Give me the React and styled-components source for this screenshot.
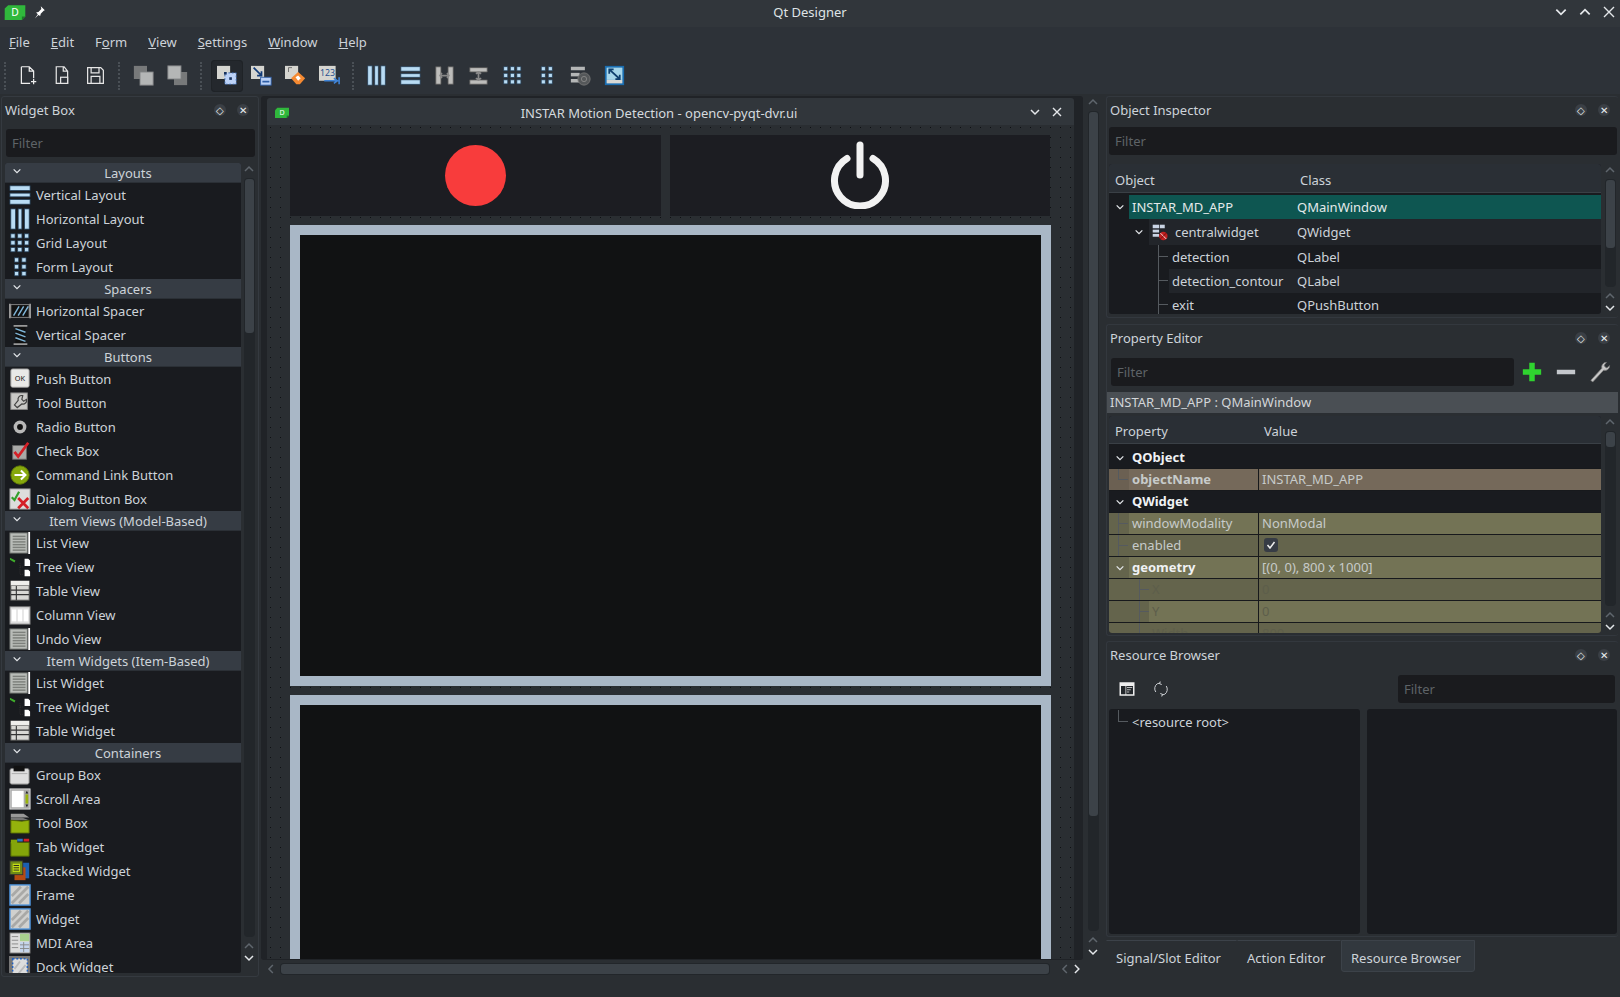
import React from 'react'
import styled, { createGlobalStyle } from 'styled-components'

const GlobalStyle = createGlobalStyle`
  html, body { margin: 0; padding: 0; background: #2a2e32; }
  #root { width: 1620px; height: 997px; overflow: hidden; }
  * { box-sizing: border-box; }
`

const Bar = ({ x, y, w, h, c = '#b9dcf4' }) => (
  <rect x={x} y={y} width={w} height={h} fill={c} stroke="#24405a" strokeWidth="0.8" />
)
const Cells = ({ cols, rows }) => (
  <>
    {rows.flatMap((y) => cols.map((x) => <Bar key={`${x}-${y}`} x={x} y={y} w={4.6} h={4.6} />))}
  </>
)
const ListSheet = (
  <>
    <rect x="1" y="1" width="19" height="22" fill="#b9bcb8" stroke="#6c6f6c" />
    {[4, 7, 10, 13, 16, 19].map((y) => <rect key={y} x="4" y={y} width="14" height="1.6" fill="#7d807c" />)}
    <rect x="21" y="0" width="2" height="24" fill="#fff" />
  </>
)
const TreeGlyph = (
  <>
    <path d="M1 2l6 3-1 2-5-3z" fill="#3fae2a" />
    <path d="M12 8v12M12 12h4M12 20h4" stroke="#333" strokeDasharray="1 1" fill="none" />
    <path d="M17 3h4l2 2v6h-6zM17 15h4l2 2v5h-6z" fill="#fff" />
  </>
)
const TableGlyph = (
  <>
    <rect x="2" y="1" width="20" height="21" fill="#d8d8d4" stroke="#555" />
    <path d="M2 6h20M2 11h20M2 16h20M8 1v21" stroke="#333" strokeWidth="1.2" />
    <rect x="2" y="1" width="20" height="5" fill="#efefec" />
  </>
)
const Hatch = (
  <>
    <rect x="1" y="1" width="22" height="22" fill="#d0d0ce" stroke="#4a90d8" strokeWidth="1.5" />
    <path d="M3 13L13 3M3 21L21 3M11 21L21 11" stroke="#a9a9a7" strokeWidth="3" />
  </>
)

const icons = {
  newDoc: <path d="M5 2h9l5 5v8M5 2v19h10M14 2v5h5M16 19h6M19 16v6" fill="none" stroke="#eee" strokeWidth="1.4" />,
  openDoc: <><path d="M6 2h9l4 5v14H6zM14 2v5h5" fill="none" stroke="#e6e6e6" strokeWidth="1.4" /><rect x="11" y="14" width="8" height="7" fill="#2e333a" stroke="#e6e6e6" strokeWidth="1.4" /></>,
  save: <path d="M3 3h15l3 3v15H3zM7 3v6h9V3M7 21v-8h10v8" fill="none" stroke="#e6e6e6" strokeWidth="1.4" />,
  back: <><rect x="1" y="1" width="15" height="15" fill="#77797a" /><rect x="8" y="8" width="15" height="15" fill="#b4b6b6" stroke="#808284" /></>,
  front: <><rect x="8" y="8" width="15" height="15" fill="#77797a" /><rect x="1" y="1" width="15" height="15" fill="#b4b6b6" stroke="#808284" /></>,
  editWidget: <><rect x="0" y="1" width="15" height="15" fill="#d5d5d0" /><rect x="9" y="9" width="13" height="13" fill="#bcd2f7" stroke="#2f5fa8" strokeDasharray="2 2" /><rect x="14" y="14" width="3" height="3" fill="#17325e" /><rect x="8" y="8" width="3" height="3" fill="#17325e" /></>,
  editSignal: <><rect x="0" y="1" width="15" height="15" fill="#d5d5d0" /><rect x="11" y="14" width="12" height="9" fill="#bcd2f7" stroke="#2f5fa8" /><rect x="13" y="18" width="8" height="2" fill="#2f5fa8" /><path d="M3 3l9 9M12 7v5H7" stroke="#123b78" strokeWidth="2" fill="none" /></>,
  editBuddy: <><rect x="0" y="1" width="15" height="15" fill="#d5d5d0" /><path d="M4 8V3h4" stroke="#666" fill="none" /><path d="M7 15l8-7 8 7-6 7h-4z" fill="#f58a32" /><path d="M12 14l3-2 3 3-3 3z" fill="#fff" /></>,
  editTab: <><rect x="0" y="1" width="19" height="17" fill="#d5d5d0" /><text x="1" y="12" fontSize="10" fill="#27508f" fontFamily="Noto Sans">123</text><path d="M6 18h14M17 15l4 3-4 3M23 14v8" stroke="#3f84d8" strokeWidth="1.8" fill="none" /></>,
  splitH: <><path d="M2 2h6v20H2zM16 2h6v20h-6z" fill="#bdbdbb" stroke="#555" /><path d="M8 12h8M9 9l-2 3 2 3M15 9l2 3-2 3" stroke="#888" strokeWidth="2" fill="none" /></>,
  splitV: <><path d="M2 3h20v5H2zM2 17h20v5H2z" fill="#bdbdbb" stroke="#555" /><path d="M12 8v9M9 10l3-2 3 2M9 15l3 2 3-2" stroke="#888" strokeWidth="2" fill="none" /></>,
  breakLayout: <><rect x="1" y="2" width="16" height="4" fill="#b4b6b6" /><rect x="1" y="9" width="10" height="4" fill="#b4b6b6" /><rect x="1" y="16" width="10" height="4" fill="#b4b6b6" /><circle cx="16" cy="16" r="7" fill="#55585a" stroke="#777" /><circle cx="16" cy="16" r="3" fill="none" stroke="#888" /></>,
  adjust: <><rect x="1" y="1" width="22" height="22" fill="#1a6db0" /><rect x="3" y="3" width="18" height="14" fill="#a7d6ea" /><rect x="3" y="17" width="18" height="4" fill="#d8d8d4" /><path d="M6 5l12 11M6 10V5h5M18 11v5h-5" stroke="#0f3f6e" strokeWidth="2" fill="none" /></>,
  vLayout: <><Bar x={1} y={2} w={22} h={5} /><Bar x={1} y={10} w={22} h={4} /><Bar x={1} y={17} w={22} h={5} /></>,
  hLayout: <><Bar x={2} y={1} w={5} h={22} /><Bar x={10} y={1} w={4} h={22} /><Bar x={17} y={1} w={5} h={22} /></>,
  gridLayout: <Cells cols={[2, 9.5, 17]} rows={[2, 9.5, 17]} />,
  formLayout: <Cells cols={[6, 14]} rows={[2, 9.5, 17]} />,
  hSpacer: <><path d="M2 5h20v14H2z" fill="#111" stroke="#888" /><path d="M1 4v16M23 4v16" stroke="#999" strokeWidth="2" /><path d="M5 17l6-10M10 17l6-10M15 17l6-10" stroke="#7fb5d8" strokeWidth="1.6" /></>,
  vSpacer: <><path d="M7 2h11v20H7z" fill="#111" /><path d="M5 2h15M5 22h15" stroke="#999" strokeWidth="2" /><path d="M7 5l11 4M7 10l11 4M7 15l11 4" stroke="#7fb5d8" strokeWidth="1.6" /></>,
  push: <><rect x="2" y="1" width="20" height="20" rx="2" fill="#e9e9e7" stroke="#999" /><text x="12" y="14" textAnchor="middle" fontSize="8" fill="#111" fontFamily="Noto Sans">OK</text></>,
  tool: <><rect x="2" y="1" width="18" height="18" fill="#c9c9c7" stroke="#888" /><path d="M15 4a4 4 0 0 0-5 5l-4 5 3 3 5-4a4 4 0 0 0 5-5l-3 2-2-2z" fill="none" stroke="#444" strokeWidth="1.3" /></>,
  radio: <><circle cx="12" cy="12" r="7" fill="#b8b8b8" /><circle cx="12" cy="12" r="3.2" fill="#111" /></>,
  check: <><rect x="4" y="6" width="15" height="15" fill="#a9a9a7" stroke="#666" /><path d="M6 13l4 5 11-15" fill="none" stroke="#d42027" strokeWidth="3" /></>,
  command: <><circle cx="12" cy="12" r="10" fill="#86a80c" stroke="#5e7608" /><path d="M6 12h11M13 7l5 5-5 5" stroke="#fff" strokeWidth="2.2" fill="none" /></>,
  dialog: <><rect x="1" y="1" width="22" height="22" fill="#ddd" stroke="#999" /><path d="M3 10l3 3 5-9" stroke="#33a02c" strokeWidth="2.4" fill="none" /><path d="M10 11l11 11M21 11L10 22" stroke="#d42027" strokeWidth="3" /></>,
  list: ListSheet,
  tree: TreeGlyph,
  table: TableGlyph,
  column: <><rect x="1" y="3" width="22" height="19" fill="#ddd" stroke="#777" /><rect x="3" y="6" width="5" height="13" fill="#fff" /><rect x="9.5" y="6" width="5" height="13" fill="#fff" /><rect x="16" y="6" width="5" height="13" fill="#fff" /></>,
  group: <><rect x="1" y="5" width="21" height="17" rx="2" fill="#dedede" stroke="#777" /><rect x="5" y="2" width="12" height="6" fill="#111" /><rect x="3" y="10" width="17" height="1" fill="#aaa" /></>,
  scroll: <><rect x="1" y="1" width="22" height="22" fill="#aaa" stroke="#ddd" /><rect x="3" y="3" width="13" height="18" fill="#fff" /><rect x="18" y="7" width="3" height="10" fill="#9ab40c" /><path d="M19.5 3l-1.5 3h3zM19.5 21l-1.5-3h3z" fill="#222" /></>,
  toolbox: <><path d="M2 2h14l6 4H2z" fill="#999" /><path d="M2 6h12l8 3H2z" fill="#777" /><path d="M2 9l12 1 8-1v14H2z" fill="#94b30c" stroke="#536608" /></>,
  tab: <><path d="M2 7h20v15H2z" fill="#84a50a" stroke="#4e6206" /><rect x="2" y="4" width="7" height="4" fill="#84a50a" /><rect x="9" y="3" width="6" height="3" fill="#2a73c4" /><rect x="16" y="3" width="6" height="3" fill="#d42027" /></>,
  stacked: <><rect x="12" y="3" width="10" height="17" fill="#1c5fb0" /><rect x="6" y="8" width="12" height="14" fill="#b54a12" /><rect x="1" y="1" width="14" height="15" fill="#6f8a18" stroke="#333" /><rect x="4" y="4" width="8" height="9" fill="#c4dc16" /><path d="M5 6h6M5 8.500h6M5 11h6" stroke="#222" /></>,
  frame: Hatch,
  widget: Hatch,
  mdi: <><rect x="1" y="1" width="22" height="22" fill="#ddd" stroke="#666" /><rect x="12" y="2" width="10" height="8" fill="#a9d18e" /><rect x="12" y="11" width="10" height="11" fill="#c4d4ec" /><path d="M12 14h10M12 18h10M16 11v11M3 5h7M3 9h7M3 13h7M3 17h7" stroke="#888" /></>,
  dock: <><rect x="0" y="0" width="23" height="24" fill="#777" /><rect x="4" y="3" width="16" height="21" fill="#ddd" stroke="#1f5fc0" strokeDasharray="2 2" strokeWidth="1.6" /><path d="M6 14l6-8M8 22l10-12" stroke="#bbb" strokeWidth="2" /></>,
  formIcon: <><rect x="1" y="1" width="9" height="5" fill="#c9d4e4" /><rect x="1" y="8" width="9" height="4" fill="#c9d4e4" /><rect x="1" y="14" width="9" height="4" fill="#c9d4e4" /><rect x="11" y="1" width="7" height="5" fill="#c9d4e4" /><circle cx="16" cy="17" r="6" fill="#c02020" /><path d="M12 13l8 8" stroke="#fff" strokeWidth="1.2" /><path d="M12 21l8-8" stroke="#5a0000" /></>,
  plus: <path d="M12 2v20M2 12h20" stroke="#2fd32f" strokeWidth="6" />,
  minus: <path d="M2 12h20" stroke="#c4c7cc" strokeWidth="5" />,
  wrench: <path d="M2 21L14 8a5 5 0 0 1 5-6.500l-2.500 3 1 2 2 1 3-2.500a5 5 0 0 1-6.500 5L4 23z" fill="#c8c8c8" stroke="#777" strokeWidth="0.8" />,
  sheet: <><rect x="2" y="3" width="20" height="18" fill="#eee" /><rect x="4" y="8" width="6" height="11" fill="#23272b" /><rect x="11" y="8" width="9" height="11" fill="#23272b" /><path d="M12 10h7M12 13h5M12 16h3" stroke="#eee" /></>,
  reload: <path d="M5 16a8 8 0 0 1 2-11l4-1M19 8a8 8 0 0 1-2 11l-4 1M11 2l-1 3 3 1M13 22l1-3-3-1" fill="none" stroke="#cfd2d6" strokeWidth="1.3" />,
  pin: <path d="M15 2l7 7-2 1-5 5-1 4-3-2-6 6 5-7-3-3 4-1 5-5z" fill="#fff" />,
}

const Icon = ({ name, size = 22 }) => (
  <svg width={size} height={size} viewBox="0 0 24 24" aria-hidden="true">{icons[name]}</svg>
)

const Logo = ({ w = 18, h = 14 }) => (
  <svg width={w} height={h} viewBox="0 0 18 14" aria-hidden="true">
    <path d="M3 1h15v10l-3 3H0V4z" fill="#30b83c" />
    <path d="M15 14l3-3h-3z" fill="#1c7a28" />
    <text x="9" y="10.500" textAnchor="middle" fontSize="9" fill="#fff" fontFamily="Noto Sans">D</text>
  </svg>
)

const Chevron = ({ dir = 'down', dim, size = 12, color }) => {
  const d = { down: 'M2 4l4 4 4-4', up: 'M2 8l4-4 4 4', left: 'M8 2L4 6l4 4', right: 'M4 2l4 4-4 4' }[dir]
  return (
    <svg width={size} height={size} viewBox="0 0 12 12" aria-hidden="true">
      <path d={d} fill="none" stroke={color || (dim ? '#5f666d' : '#e4e7ea')} strokeWidth="1.5" />
    </svg>
  )
}

const Page = styled.div`
  width: 1620px;
  height: 997px;
  display: flex;
  flex-direction: column;
  overflow: hidden;
  background: #2a2e32;
  color: #cdd3d9;
  font-family: "Noto Sans", sans-serif;
  font-size: 13px;
`

const TitleBar = styled.div`
  height: 27px;
  flex: none;
  display: flex;
  align-items: center;
  position: relative;
  padding: 0 3px 3px 4px;
  gap: 6px;
  background: #31363b;
  color: #dfe3e6;
`

const AppTitle = styled.div`
  position: absolute;
  left: 0;
  right: 0;
  text-align: center;
`

const WindowButtons = styled.div`
  margin-left: auto;
  display: flex;
  gap: 10px;
  padding-right: 1px;
`

const MenuBar = styled.div`
  height: 31px;
  flex: none;
  display: flex;
  align-items: center;
  padding: 0 0 2px 9px;
  gap: 21px;
  background: #2d3238;
`

const ToolBar = styled.div`
  height: 36px;
  flex: none;
  display: flex;
  align-items: center;
  padding: 0 0 1px 4px;
  background: #2d3238;
`

const Grip = styled.div`
  width: 2px;
  height: 28px;
  border-left: 2px dotted #4a5056;
  flex: none;
  margin: ${(p) => p.$margin};
`

const ToolButton = styled.div`
  width: 32px;
  height: 32px;
  flex: none;
  margin-right: 2px;
  display: flex;
  align-items: center;
  justify-content: center;
  border-radius: 4px;
  background: ${(p) => (p.$active ? '#24282d' : 'transparent')};
  box-shadow: ${(p) => (p.$active ? 'inset 0 0 0 1px #1f2327' : 'none')};
`

const Main = styled.div`
  flex: 1;
  display: flex;
  min-height: 0;
  padding-top: 2px;
`

const LeftDock = styled.div`
  width: 258px;
  height: 881px;
  flex: none;
  margin-left: 1px;
  padding: 0 3px;
  display: flex;
  flex-direction: column;
  border: 1px solid #353a40;
  border-radius: 3px;
`

const DockHead = styled.div`
  height: 26px;
  flex: none;
  display: flex;
  align-items: center;
  padding-left: ${(p) => p.$pad}px;
  color: #cdd3d9;
`

const DockButtons = styled.div`
  margin-left: auto;
  display: flex;
  align-items: center;
  gap: 11px;
  padding-right: ${(p) => p.$right}px;
`

const DockButton = styled.div`
  width: 12px;
  height: 12px;
  border-radius: 50%;
  background: #3a3f45;
  color: #eceff1;
  display: flex;
  align-items: center;
  justify-content: center;
  font-size: 10px;
  line-height: 12px;
`

const Filter = styled.div`
  height: 28px;
  width: ${(p) => (p.$width ? `${p.$width}px` : 'auto')};
  flex: none;
  margin: ${(p) => p.$margin || 0};
  padding: 0 6px;
  display: flex;
  align-items: center;
  border-radius: 3px;
  background: #1a1b1e;
  color: #5e6367;
`

const BoxBody = styled.div`
  flex: 1;
  display: flex;
  min-height: 0;
  margin-top: 6px;
`

const BoxList = styled.div`
  width: 236px;
  margin-right: 1px;
  margin-bottom: 3px;
  overflow: hidden;
  flex: none;
  background: #191b1f;
  border-radius: 2px;
`

const Category = styled.div`
  height: 20px;
  position: relative;
  display: flex;
  align-items: center;
  justify-content: center;
  padding-left: 10px;
  background: #363c44;
  border-bottom: 1px solid #2b3036;
`

const CategoryArrow = styled.span`
  position: absolute;
  left: 7px;
  top: 3px;
  display: flex;
`

const BoxItem = styled.div`
  height: 24px;
  display: flex;
  align-items: center;
  padding-left: 4px;
  gap: 5px;
  color: #cdd3d9;
`

const ScrollTrack = styled.div`
  width: 14px;
  flex: none;
  display: flex;
  flex-direction: column;
  align-items: center;
  height: ${(p) => p.$height}px;
`

const ScrollGroove = styled.div`
  flex: 1;
  width: 11px;
  margin: 3px 0;
  padding: 1px;
  border-radius: 4px;
  background: #22262a;
`

const ScrollThumb = styled.div`
  height: ${(p) => p.$size}px;
  border-radius: 3px;
  background: #3c4248;
`

const Scrollbar = ({ height, thumb }) => (
  <ScrollTrack $height={height}>
    <Chevron dir="up" dim />
    <ScrollGroove><ScrollThumb $size={thumb} /></ScrollGroove>
    <Chevron dir="up" dim />
    <Chevron dir="down" />
  </ScrollTrack>
)

const Center = styled.div`
  width: 842px;
  margin-left: 2px;
  flex: none;
  display: flex;
  flex-direction: column;
`

const CenterTop = styled.div`
  height: 864px;
  display: flex;
  gap: 3px;
`

const MdiArea = styled.div`
  width: 822px;
  padding: 2px 9px 0 6px;
  background: #202327;
  border-radius: 3px;
  overflow: hidden;
`

const SubWindow = styled.div`
  width: 807px;
  height: 861px;
  display: flex;
  flex-direction: column;
  overflow: hidden;
  border-radius: 3px 3px 0 0;
`

const SubTitle = styled.div`
  height: 27px;
  flex: none;
  display: flex;
  align-items: center;
  position: relative;
  padding: 1px 10px 0 8px;
  background: #31363b;
  color: #d5dade;
`

const SubTitleText = styled.div`
  position: absolute;
  left: 0;
  right: 23px;
  top: 6px;
  text-align: center;
`

const SubButtons = styled.div`
  margin-left: auto;
  display: flex;
  align-items: center;
  gap: 10px;
  padding-right: 1px;
`

const Form = styled.div`
  flex: 1;
  padding: 10px 23px 0 23px;
  overflow: hidden;
  background-color: #2a2e32;
  background-image: radial-gradient(circle at 0.5px 0.5px, #0e1012 0.7px, transparent 0.8px);
  background-size: 10px 10px;
  background-position: 3px 2px;
`

const ButtonRow = styled.div`
  display: grid;
  grid-template-columns: 371px 380px;
  gap: 9px;
  height: 81px;
`

const FormButton = styled.div`
  display: flex;
  align-items: center;
  justify-content: center;
  background: #1c1d22;
`

const RecordDot = styled.div`
  width: 61px;
  height: 61px;
  border-radius: 50%;
  background: #f83c3c;
`

const PowerIcon = styled.svg`
  margin-bottom: 2px;
`

const VideoFrame = styled.div`
  height: ${(p) => p.$height}px;
  margin-top: 9px;
  border: 10px solid #a9b7c6;
  background: #111213;
`

const HScroll = styled.div`
  height: 16px;
  padding: 1px 20px 0 4px;
  display: flex;
  align-items: center;
`

const HGroove = styled.div`
  width: 783px;
  height: 12px;
  margin: 0 9px 0 3px;
  padding: 1px;
  border-radius: 4px;
  background: #22262a;
`

const HThumb = styled.div`
  height: 100%;
  border-radius: 3px;
  background: #3c4248;
`

const RightDock = styled.div`
  flex: 1;
  min-width: 0;
  padding: 0 2px 0 3px;
  display: flex;
  flex-direction: column;
`

const DockPanel = styled.div`
  height: ${(p) => p.$height}px;
  flex: none;
  margin-bottom: ${(p) => p.$gap || 0}px;
  padding-left: 2px;
  border: 1px solid #33383e;
  border-right: 0;
  border-radius: 3px;
  display: flex;
  flex-direction: column;
  overflow: hidden;
`

const TreeWrap = styled.div`
  display: flex;
  margin-top: ${(p) => p.$top}px;
  gap: ${(p) => p.$gap || 2}px;
`

const TreeView = styled.div`
  width: 492px;
  height: ${(p) => p.$height}px;
  flex: none;
  overflow: hidden;
  background: #191b1f;
  border-radius: 3px;
`

const TreeHead = styled.div`
  height: ${(p) => p.$height}px;
  display: flex;
  align-items: center;
  padding: 3px 0 0 6px;
  background: #2a2f35;
  border-bottom: 1px solid #3a4046;
`

const HeadCell = styled.div`
  width: ${(p) => p.$width || 'auto'}px;
  flex: none;
`

const TreeRow = styled.div`
  height: ${(p) => p.$height || 24}px;
  margin-top: ${(p) => p.$top || 0}px;
  display: flex;
`

const Gutter = styled.div`
  width: ${(p) => p.$width}px;
  flex: none;
  position: relative;
  background: ${(p) => p.$bg || 'transparent'};
`

const Branch = styled.span`
  position: absolute;
  left: ${(p) => p.$left}px;
  top: 0;
  height: 50%;
  width: 10px;
  border-left: 1px solid #555a5f;
  border-bottom: 1px solid #555a5f;
  &::after {
    content: '';
    display: ${(p) => (p.$through ? 'block' : 'none')};
    position: absolute;
    left: -1px;
    top: 100%;
    height: 120%;
    border-left: 1px solid #555a5f;
  }
`

const ArrowSlot = styled.span`
  position: absolute;
  left: ${(p) => p.$left}px;
  top: 50%;
  margin-top: -5px;
  display: flex;
`

const TreeBody = styled.div`
  flex: 1;
  display: flex;
  align-items: center;
  gap: 6px;
  padding-left: 3px;
  background: ${(p) => p.$bg || 'transparent'};
  color: ${(p) => (p.$selected ? '#e4e9ea' : '#cdd3d9')};
`

const TreeName = styled.div`
  width: ${(p) => p.$width}px;
  flex: none;
`

const PropRow = styled.div`
  height: 22px;
  margin-top: ${(p) => p.$top || 0}px;
  display: flex;
  border-bottom: 1px solid #17191c;
  background: ${(p) => p.$bg || 'transparent'};
`

const PropName = styled.div`
  width: ${(p) => p.$width}px;
  flex: none;
  padding-left: 3px;
  line-height: 21px;
  font-weight: ${(p) => (p.$bold ? 700 : 400)};
  color: ${(p) => (p.$muted ? '#5d5e4b' : p.$bold && !p.$bg ? '#f0f2f4' : '#c7cbca')};
  background: ${(p) => p.$bg || 'transparent'};
`

const PropValue = styled.div`
  flex: 1;
  display: flex;
  align-items: center;
  padding: 0 0 2px 3px;
  border-left: 1px solid #17191c;
  color: ${(p) => (p.$muted ? '#5d5e4b' : '#c7cbca')};
`

const CheckMark = styled.div`
  width: 14px;
  height: 14px;
  margin-left: 2px;
  border-radius: 3px;
  background: #373c45;
  display: flex;
  align-items: center;
  justify-content: center;
`

const FilterRow = styled.div`
  display: flex;
  align-items: center;
  height: 30px;
  margin-top: ${(p) => p.$top || 0}px;
`

const IconButton = styled.div`
  width: 34px;
  flex: none;
  margin-left: ${(p) => p.$left || 0}px;
  display: flex;
  justify-content: center;
`

const ClassBar = styled.div`
  height: 21px;
  margin: 5px 0 0 -2px;
  padding-left: 3px;
  line-height: 20px;
  background: #4a4f54;
  color: #d3d6d9;
`

const ResourcePane = styled.div`
  width: ${(p) => p.$width}px;
  height: 225px;
  flex: none;
  background: #191b1f;
  border-radius: 3px;
  padding-top: 1px;
`

const TabRow = styled.div`
  display: flex;
  height: 32px;
  margin-top: 3px;
`

const Tab = styled.div`
  width: ${(p) => p.$width}px;
  flex: none;
  padding-left: 9px;
  padding-top: 8px;
  background: ${(p) => (p.$active ? '#32383e' : 'transparent')};
  border: 1px solid ${(p) => (p.$active ? '#3c4249' : 'transparent')};
  border-top-color: #3c4249;
  border-radius: 0 0 3px 3px;
`

const DockTitle = ({ title, right, pad = 1 }) => (
  <DockHead $pad={pad}>
    {title}
    <DockButtons $right={right}>
      <DockButton>◇</DockButton>
      <DockButton>✕</DockButton>
    </DockButtons>
  </DockHead>
)

const TreeArrow = ({ left }) => (
  <ArrowSlot $left={left}><Chevron size={10} /></ArrowSlot>
)

const widgetGroups = [
  ['Layouts', [['Vertical Layout', 'vLayout'], ['Horizontal Layout', 'hLayout'], ['Grid Layout', 'gridLayout'], ['Form Layout', 'formLayout']]],
  ['Spacers', [['Horizontal Spacer', 'hSpacer'], ['Vertical Spacer', 'vSpacer']]],
  ['Buttons', [['Push Button', 'push'], ['Tool Button', 'tool'], ['Radio Button', 'radio'], ['Check Box', 'check'], ['Command Link Button', 'command'], ['Dialog Button Box', 'dialog']]],
  ['Item Views (Model-Based)', [['List View', 'list'], ['Tree View', 'tree'], ['Table View', 'table'], ['Column View', 'column'], ['Undo View', 'list']]],
  ['Item Widgets (Item-Based)', [['List Widget', 'list'], ['Tree Widget', 'tree'], ['Table Widget', 'table']]],
  ['Containers', [['Group Box', 'group'], ['Scroll Area', 'scroll'], ['Tool Box', 'toolbox'], ['Tab Widget', 'tab'], ['Stacked Widget', 'stacked'], ['Frame', 'frame'], ['Widget', 'widget'], ['MDI Area', 'mdi'], ['Dock Widget', 'dock']]],
]

const menus = [['F', 'ile'], ['E', 'dit'], ['F', 'o', 'rm'], ['V', 'iew'], ['S', 'ettings'], ['W', 'indow'], ['H', 'elp']]

const toolGroups = [
  ['newDoc', 'openDoc', 'save'],
  ['back', 'front'],
  ['editWidget', 'editSignal', 'editBuddy', 'editTab'],
  ['hLayout', 'vLayout', 'splitH', 'splitV', 'gridLayout', 'formLayout', 'breakLayout', 'adjust'],
]
const gripMargins = ['', '0 7px 0 5px', '0 9px 0 5px', '0 6px 0 5px']

const olive = '#737355'
const oliveDark = '#64644c'

const App = () => (
  <Page>
    <GlobalStyle />
    <TitleBar>
      <Logo w={22} h={16} />
      <Icon name="pin" size={14} />
      <AppTitle>Qt Designer</AppTitle>
      <WindowButtons>
        <Chevron dir="down" size={14} />
        <Chevron dir="up" size={14} />
        <svg width="14" height="14" viewBox="0 0 14 14" aria-hidden="true"><path d="M2 2l10 10M12 2L2 12" stroke="#e4e7ea" strokeWidth="1.4" /></svg>
      </WindowButtons>
    </TitleBar>

    <MenuBar>
      {menus.map((m) => (
        <span key={m.join('')}>
          {m.length === 3 ? <>{m[0]}<u>{m[1]}</u>{m[2]}</> : <><u>{m[0]}</u>{m[1]}</>}
        </span>
      ))}
    </MenuBar>

    <ToolBar>
      <Grip $margin="0 5px 0 0" />
      {toolGroups.map((group, i) => (
        <React.Fragment key={group[0]}>
          {i > 0 && <Grip $margin={gripMargins[i]} />}
          {group.map((name) => (
            <ToolButton key={name} $active={name === 'editWidget'}><Icon name={name} size={21} /></ToolButton>
          ))}
        </React.Fragment>
      ))}
    </ToolBar>

    <Main>
      <LeftDock>
        <DockTitle title="Widget Box" right={6} pad={0} />
        <Filter $margin="6px 0 0 1px">Filter</Filter>
        <BoxBody>
          <BoxList>
            {widgetGroups.map(([title, items]) => (
              <React.Fragment key={title}>
                <Category>
                  <CategoryArrow><Chevron size={10} /></CategoryArrow>
                  {title}
                </Category>
                {items.map(([label, icon]) => (
                  <BoxItem key={label}><Icon name={icon} />{label}</BoxItem>
                ))}
              </React.Fragment>
            ))}
          </BoxList>
          <Scrollbar height={801} thumb={154} />
        </BoxBody>
      </LeftDock>

      <Center>
        <CenterTop>
          <MdiArea>
            <SubWindow>
              <SubTitle>
                <Logo w={14} h={11} />
                <SubTitleText>INSTAR Motion Detection - opencv-pyqt-dvr.ui</SubTitleText>
                <SubButtons>
                  <Chevron dir="down" />
                  <svg width="12" height="12" viewBox="0 0 12 12" aria-hidden="true"><path d="M2 2l8 8M10 2l-8 8" stroke="#e4e7ea" strokeWidth="1.4" /></svg>
                </SubButtons>
              </SubTitle>
              <Form>
                <ButtonRow>
                  <FormButton><RecordDot /></FormButton>
                  <FormButton>
                    <PowerIcon width="62" height="68" viewBox="0 0 62 68" aria-hidden="true">
                      <path d="M18 17.500a25.500 25.500 0 1 0 26 0" fill="none" stroke="#f2f2f2" strokeWidth="7" strokeLinecap="round" />
                      <path d="M31 4v30" stroke="#f2f2f2" strokeWidth="7" strokeLinecap="round" />
                    </PowerIcon>
                  </FormButton>
                </ButtonRow>
                <VideoFrame $height={461} />
                <VideoFrame $height={400} />
              </Form>
            </SubWindow>
          </MdiArea>
          <Scrollbar height={862} thumb={704} />
        </CenterTop>
        <HScroll>
          <Chevron dir="left" dim />
          <HGroove><HThumb /></HGroove>
          <Chevron dir="left" dim />
          <Chevron dir="right" />
        </HScroll>
      </Center>

      <RightDock>
        <DockPanel $height={222} $gap={6}>
          <DockTitle title="Object Inspector" right={8} />
          <Filter $margin="4px 1px 0 0">Filter</Filter>
          <TreeWrap $top={9}>
            <TreeView $height={150}>
              <TreeHead $height={29}>
                <HeadCell $width={185}>Object</HeadCell>
                <HeadCell>Class</HeadCell>
              </TreeHead>
              <TreeRow $height={24} $top={2}>
                <Gutter $width={20}><TreeArrow left={6} /></Gutter>
                <TreeBody $bg="#0e5651" $selected><TreeName $width={159}>INSTAR_MD_APP</TreeName>QMainWindow</TreeBody>
              </TreeRow>
              <TreeRow $height={26}>
                <Gutter $width={40}><TreeArrow left={25} /></Gutter>
                <TreeBody $bg="#22252a"><Icon name="formIcon" size={17} /><TreeName $width={116}>centralwidget</TreeName>QWidget</TreeBody>
              </TreeRow>
              <TreeRow>
                <Gutter $width={60}><Branch $left={49} $through /></Gutter>
                <TreeBody><TreeName $width={119}>detection</TreeName>QLabel</TreeBody>
              </TreeRow>
              <TreeRow>
                <Gutter $width={60}><Branch $left={49} $through /></Gutter>
                <TreeBody $bg="#22252a"><TreeName $width={119}>detection_contour</TreeName>QLabel</TreeBody>
              </TreeRow>
              <TreeRow>
                <Gutter $width={60}><Branch $left={49} $through /></Gutter>
                <TreeBody><TreeName $width={119}>exit</TreeName>QPushButton</TreeBody>
              </TreeRow>
            </TreeView>
            <Scrollbar height={150} thumb={68} />
          </TreeWrap>
        </DockPanel>

        <DockPanel $height={312} $gap={5}>
          <DockTitle title="Property Editor" right={8} />
          <FilterRow $top={6}>
            <Filter $width={403} $margin="0 0 0 2px">Filter</Filter>
            <IconButton $left={1}><Icon name="plus" /></IconButton>
            <IconButton><Icon name="minus" /></IconButton>
            <IconButton><Icon name="wrench" /></IconButton>
          </FilterRow>
          <ClassBar>INSTAR_MD_APP : QMainWindow</ClassBar>
          <TreeWrap $top={3}>
            <TreeView $height={217}>
              <TreeHead $height={28}>
                <HeadCell $width={149}>Property</HeadCell>
                <HeadCell>Value</HeadCell>
              </TreeHead>
              <PropRow $top={3}>
                <Gutter $width={20}><TreeArrow left={6} /></Gutter>
                <PropName $width={300} $bold>QObject</PropName>
              </PropRow>
              <PropRow $bg="#75695a">
                <Gutter $width={20} $bg="#6b6052"><Branch $left={9} /></Gutter>
                <PropName $width={129} $bold $bg="#75695a">objectName</PropName>
                <PropValue>INSTAR_MD_APP</PropValue>
              </PropRow>
              <PropRow>
                <Gutter $width={20}><TreeArrow left={6} /></Gutter>
                <PropName $width={300} $bold>QWidget</PropName>
              </PropRow>
              <PropRow $bg={olive}>
                <Gutter $width={20} $bg={oliveDark}><Branch $left={9} $through /></Gutter>
                <PropName $width={129}>windowModality</PropName>
                <PropValue>NonModal</PropValue>
              </PropRow>
              <PropRow $bg={oliveDark}>
                <Gutter $width={20}><Branch $left={9} $through /></Gutter>
                <PropName $width={129}>enabled</PropName>
                <PropValue>
                  <CheckMark>
                    <svg width="10" height="10" viewBox="0 0 10 10" aria-hidden="true"><path d="M1.500 5l2.500 3 4.500-6" fill="none" stroke="#eee" strokeWidth="1.500" /></svg>
                  </CheckMark>
                </PropValue>
              </PropRow>
              <PropRow $bg={olive}>
                <Gutter $width={20} $bg={oliveDark}><TreeArrow left={6} /></Gutter>
                <PropName $width={129} $bold>geometry</PropName>
                <PropValue>[(0, 0), 800 x 1000]</PropValue>
              </PropRow>
              <PropRow $bg={oliveDark}>
                <Gutter $width={40}><Branch $left={30} $through /></Gutter>
                <PropName $width={109} $muted>X</PropName>
                <PropValue $muted>0</PropValue>
              </PropRow>
              <PropRow $bg={olive}>
                <Gutter $width={40} $bg={oliveDark}><Branch $left={30} $through /></Gutter>
                <PropName $width={109} $muted>Y</PropName>
                <PropValue $muted>0</PropValue>
              </PropRow>
              <PropRow $bg={oliveDark}>
                <Gutter $width={40}><Branch $left={30} /></Gutter>
                <PropName $width={109} $muted>Width</PropName>
                <PropValue $muted>800</PropValue>
              </PropRow>
            </TreeView>
            <Scrollbar height={217} thumb={15} />
          </TreeWrap>
        </DockPanel>

        <DockPanel $height={296}>
          <DockTitle title="Resource Browser" right={8} />
          <FilterRow $top={6}>
            <IconButton $left={1}><Icon name="sheet" size={18} /></IconButton>
            <IconButton><Icon name="reload" size={18} /></IconButton>
            <Filter $width={217} $margin="0 0 0 220px">Filter</Filter>
          </FilterRow>
          <TreeWrap $top={5} $gap={7}>
            <ResourcePane $width={251}>
              <TreeRow $height={24}>
                <Gutter $width={20}><Branch $left={9} /></Gutter>
                <TreeBody>&lt;resource root&gt;</TreeBody>
              </TreeRow>
            </ResourcePane>
            <ResourcePane $width={250} />
          </TreeWrap>
        </DockPanel>

        <TabRow>
          <Tab $width={131}>Signal/Slot Editor</Tab>
          <Tab $width={104}>Action Editor</Tab>
          <Tab $width={134} $active>Resource Browser</Tab>
        </TabRow>
      </RightDock>
    </Main>
  </Page>
)

export default App
